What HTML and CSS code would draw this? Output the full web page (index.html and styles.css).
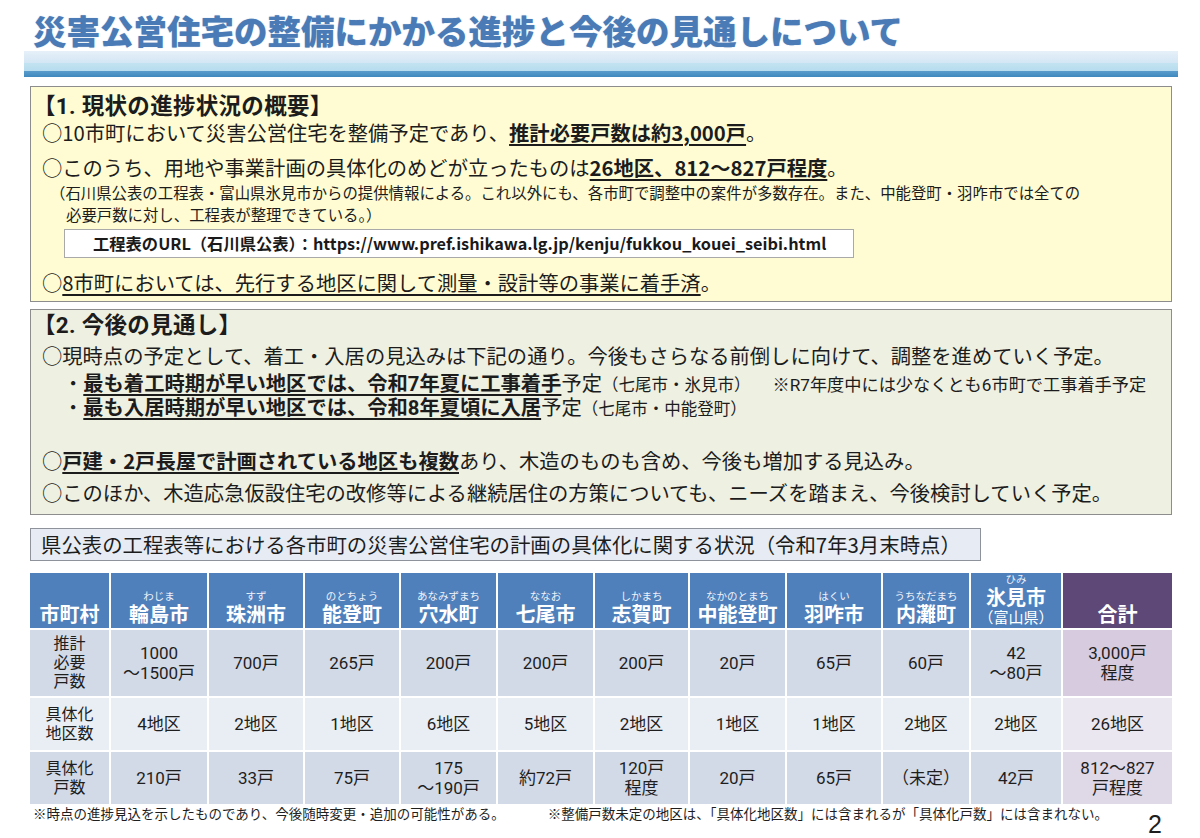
FILE: index.html
```html
<!DOCTYPE html>
<html lang="ja">
<head>
<meta charset="utf-8">
<title>災害公営住宅の整備にかかる進捗と今後の見通しについて</title>
<link rel="stylesheet" href="styles.css">
</head>
<body>
<div class="page">
  <h1 class="title">災害公営住宅の整備にかかる進捗と今後の見通しについて</h1>
  <div class="band"></div>

  <section class="box box-yellow">
    <div class="heading">【1. 現状の進捗状況の概要】</div>
    <div class="line l1">○10市町において災害公営住宅を整備予定であり、<span class="ub">推計必要戸数は約3,000戸</span>。</div>
    <div class="line l2">○このうち、用地や事業計画の具体化のめどが立ったものは<span class="ub">26地区、812～827戸程度</span>。</div>
    <div class="note">（石川県公表の工程表・富山県氷見市からの提供情報による。これ以外にも、各市町で調整中の案件が多数存在。また、中能登町・羽咋市では全ての<br>必要戸数に対し、工程表が整理できている。）</div>
    <div class="url">工程表のURL（石川県公表）：https://www.pref.ishikawa.lg.jp/kenju/fukkou_kouei_seibi.html</div>
    <div class="line l3">○<span class="u">8市町においては、先行する地区に関して測量・設計等の事業に着手済</span>。</div>
  </section>

  <section class="box box-green">
    <div class="heading">【2. 今後の見通し】</div>
    <div class="line g1">○現時点の予定として、着工・入居の見込みは下記の通り。今後もさらなる前倒しに向けて、調整を進めていく予定。</div>
    <div class="bullet b1">・<span class="ub">最も着工時期が早い地区では、令和7年夏に工事着手</span>予定<span class="sm">（七尾市・氷見市）</span><span class="sm2">※R7年度中には少なくとも6市町で工事着手予定</span></div>
    <div class="bullet b2">・<span class="ub">最も入居時期が早い地区では、令和8年夏頃に入居</span>予定<span class="sm">（七尾市・中能登町）</span></div>
    <div class="line g2">○<span class="ub">戸建・2戸長屋で計画されている地区も複数</span>あり、木造のものも含め、今後も増加する見込み。</div>
    <div class="line g3">○このほか、木造応急仮設住宅の改修等による継続居住の方策についても、ニーズを踏まえ、今後検討していく予定。</div>
  </section>

  <div class="caption">県公表の工程表等における各市町の災害公営住宅の計画の具体化に関する状況（令和7年3月末時点）</div>

  <div class="grid">
    <div class="th"><span class="name">市町村</span></div>
    <div class="th"><span class="kana">わじま</span><span class="name">輪島市</span></div>
    <div class="th"><span class="kana">すず</span><span class="name">珠洲市</span></div>
    <div class="th"><span class="kana">のとちょう</span><span class="name">能登町</span></div>
    <div class="th"><span class="kana">あなみずまち</span><span class="name">穴水町</span></div>
    <div class="th"><span class="kana">ななお</span><span class="name">七尾市</span></div>
    <div class="th"><span class="kana">しかまち</span><span class="name">志賀町</span></div>
    <div class="th"><span class="kana">なかのとまち</span><span class="name">中能登町</span></div>
    <div class="th"><span class="kana">はくい</span><span class="name">羽咋市</span></div>
    <div class="th"><span class="kana">うちなだまち</span><span class="name">内灘町</span></div>
    <div class="th"><span class="kana">ひみ</span><span class="name">氷見市</span><span class="pref">（富山県）</span></div>
    <div class="th total"><span class="name">合計</span></div>

    <div class="td rh r1">推計<br>必要<br>戸数</div>
    <div class="td r1">1000<br>～1500戸</div>
    <div class="td r1">700戸</div>
    <div class="td r1">265戸</div>
    <div class="td r1">200戸</div>
    <div class="td r1">200戸</div>
    <div class="td r1">200戸</div>
    <div class="td r1">20戸</div>
    <div class="td r1">65戸</div>
    <div class="td r1">60戸</div>
    <div class="td r1">42<br>～80戸</div>
    <div class="td t1">3,000戸<br>程度</div>

    <div class="td rh r2">具体化<br>地区数</div>
    <div class="td r2">4地区</div>
    <div class="td r2">2地区</div>
    <div class="td r2">1地区</div>
    <div class="td r2">6地区</div>
    <div class="td r2">5地区</div>
    <div class="td r2">2地区</div>
    <div class="td r2">1地区</div>
    <div class="td r2">1地区</div>
    <div class="td r2">2地区</div>
    <div class="td r2">2地区</div>
    <div class="td t2">26地区</div>

    <div class="td rh r3">具体化<br>戸数</div>
    <div class="td r3">210戸</div>
    <div class="td r3">33戸</div>
    <div class="td r3">75戸</div>
    <div class="td r3">175<br>～190戸</div>
    <div class="td r3">約72戸</div>
    <div class="td r3">120戸<br>程度</div>
    <div class="td r3">20戸</div>
    <div class="td r3">65戸</div>
    <div class="td r3">（未定）</div>
    <div class="td r3">42戸</div>
    <div class="td t3">812～827<br>戸程度</div>
  </div>

  <div class="foot">
    <span class="fn1">※時点の進捗見込を示したものであり、今後随時変更・追加の可能性がある。</span>
    <span class="fn2">※整備戸数未定の地区は、「具体化地区数」には含まれるが「具体化戸数」には含まれない。</span>
    <span class="pageno">2</span>
  </div>
</div>
</body>
</html>
```

FILE: styles.css
```css
html, body {
  margin: 0;
  padding: 0;
  background: #ffffff;
}
body {
  font-family: "Noto Sans CJK JP", "Noto Sans", sans-serif;
  color: #1c1c1c;
}
.page {
  width: 1200px;
  height: 838px;
  overflow: hidden;
  position: relative;
}
.title {
  margin: 0;
  padding: 10px 0 0 33px;
  height: 40px;
  font-size: 33.5px;
  line-height: 40px;
  font-weight: 900;
  color: #4b7bb6;
  letter-spacing: 0;
  white-space: nowrap;
  text-shadow: 0 0 1px rgba(75,123,182,0.5);
}
.band {
  margin: 1px 0 0 24px;
  width: 1154px;
  height: 26px;
  background: linear-gradient(to bottom,
    #e6f0f9 0px, #d4e6f4 12px,
    #c3e3f1 12px, #b6dcee 20px,
    #5a9ccb 20px, #3f89bf 26px);
}
.box {
  margin-left: 30px;
  border: 1px solid #8d8d8d;
  box-sizing: content-box;
  padding: 0 0 0 11px;
  width: 1129px;
  white-space: nowrap;
}
.box-yellow {
  margin-top: 9px;
  background: #fffcd3;
  padding-top: 6px;
  padding-bottom: 6px;
}
.box-green {
  margin-top: 7px;
  background: #eef0e1;
  padding-top: 2px;
  padding-bottom: 9px;
}
.heading {
  margin-left: -9px;
  font-family: "Roboto", "Noto Sans CJK JP", sans-serif;
  font-size: 22.5px;
  line-height: 26px;
  font-weight: 700;
  height: 26px;
  letter-spacing: 0.3px;
}
.line {
  font-size: 20.3px;
  line-height: 26px;
  height: 26px;
}
.l2 { margin-top: 9px; }
.l3 { margin-top: 11px; }
.g1 { margin-top: 4px; }
.g2 { margin-top: 27px; }
.g3 { margin-top: 6px; }
.ub {
  font-weight: 700;
  text-decoration: underline;
  text-decoration-thickness: 1.5px;
  text-underline-offset: 3px;
}
.u {
  text-decoration: underline;
  text-decoration-thickness: 1.5px;
  text-underline-offset: 3px;
}
.note {
  margin-top: 1px;
  padding-left: 24px;
  text-indent: -16px;
  font-size: 15.4px;
  line-height: 22.4px;
}
.url {
  margin: 3px 0 0 22px;
  width: 760px;
  height: 27px;
  padding-left: 28px;
  background: #ffffff;
  border: 1px solid #a9a9a9;
  font-size: 16.3px;
  font-weight: 700;
  line-height: 27px;
  color: #1a1a1a;
}
.bullet {
  padding-left: 21px;
  font-family: "Roboto", "Noto Sans CJK JP", sans-serif;
  font-size: 20.3px;
  line-height: 24px;
  height: 24px;
}
.b1 { margin-top: 4px; }
.sm {
  font-size: 16.5px;
}
.sm2 {
  font-size: 17.2px;
  margin-left: 22px;
}
.caption {
  margin: 13px 0 0 30px;
  width: 939px;
  height: 31px;
  padding-left: 10px;
  border: 1px solid #8d929b;
  background: #e7ecf4;
  font-size: 20.4px;
  line-height: 31px;
  white-space: nowrap;
}
.grid {
  margin: 12px 0 0 30px;
  width: 1142px;
  display: grid;
  grid-template-columns: 79px 96px 94px 94px 95px 95px 93px 95px 94px 86px 90px 109px;
  grid-template-rows: 55px 66px 52px 52px;
  gap: 2px;
  background: #ffffff;
  font-family: "Roboto", "Noto Sans CJK JP", sans-serif;
}
.th {
  background: #4f80bc;
  color: #ffffff;
  display: flex;
  flex-direction: column;
  align-items: center;
  justify-content: flex-end;
  padding-bottom: 1px;
  text-align: center;
}
.th.total {
  background: #5d4878;
}
.kana {
  font-size: 10.5px;
  line-height: 13px;
  margin-bottom: 1px;
  color: #eef2fa;
}
.name {
  font-size: 20px;
  line-height: 23px;
  font-weight: 700;
}
.pref {
  font-size: 15px;
  line-height: 17px;
}
.td {
  display: flex;
  align-items: center;
  justify-content: center;
  text-align: center;
  font-size: 17px;
  line-height: 20px;
  color: #1e1e1e;
}
.rh {
  font-size: 16px;
  line-height: 19px;
}
.r1, .r3 { background: #d2d9e7; }
.r2 { background: #e9edf4; }
.t1 { background: #d6cbdf; }
.t2 { background: #ebe7f0; }
.t3 { background: #dfd8e7; }
.foot {
  display: flex;
  align-items: flex-start;
  margin: 1px 0 0 33px;
  font-size: 13.5px;
  line-height: 16px;
  white-space: nowrap;
  color: #1e1e1e;
}
.fn2 {
  margin-left: 43px;
}
.pageno {
  margin-left: auto;
  margin-right: 38px;
  margin-top: 8px;
  font-size: 25px;
  line-height: 22px;
  font-family: "Liberation Sans", "Noto Sans", sans-serif;
}
```
